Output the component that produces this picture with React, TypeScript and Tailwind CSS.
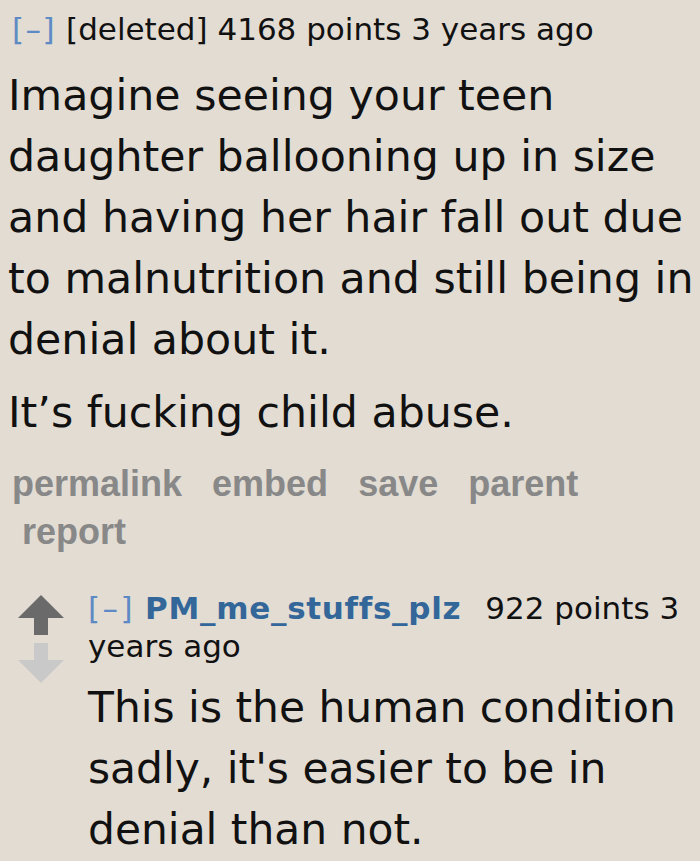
import React from "react";

const verdana = { fontFamily: '"DejaVu Sans", Verdana, sans-serif' };

const Arrow = ({ up, color }: { up?: boolean; color: string }) => (
  <svg width="46" height="40" viewBox="0 0 46 40" className={up ? "" : "rotate-180"}>
    <path d="M23 0 L46 23 L30 23 L30 40 L16 40 L16 23 L0 23 Z" fill={color} />
  </svg>
);

const links = ["permalink", "embed", "save", "parent", "report"];

export default function App() {
  return (
    <div
      className="w-[700px] h-[861px] overflow-hidden bg-[#e2dcd3] text-[#111] pl-[8px]"
      style={verdana}
    >
      {/* top comment */}
      <div className="pt-[12px] text-[31px] leading-[34px] whitespace-nowrap pl-[4px]">
        <span className="text-[#5d8ac4] tracking-[1.5px]">[–]</span>{" "}
        <span>[deleted]</span> 4168 points 3 years ago
      </div>

      <div className="text-[42.7px] leading-[61px] mt-[19px] whitespace-nowrap">
        <p>
          Imagine seeing your teen
          <br />
          daughter ballooning up in size
          <br />
          and having her hair fall out due
          <br />
          to malnutrition and still being in
          <br />
          denial about it.
        </p>
        <p className="mt-[12px]">It’s fucking child abuse.</p>
      </div>

      <ul
        className="flex flex-wrap gap-x-[30px] gap-y-[10px] w-[600px] pl-[4px] mt-[22px] font-bold text-[36px] leading-[38px] text-[#888888]"
        style={{ fontFamily: '"Liberation Sans", Arial, sans-serif' }}
      >
        {links.map((l, i) => (
          <li key={l} className={i === 4 ? "pl-[10px]" : ""}>
            {l}
          </li>
        ))}
      </ul>

      {/* child comment */}
      <div className="flex mt-[38px] pl-[10px]">
        <div className="flex flex-col gap-[8px] w-[70px] pt-[6px]">
          <Arrow up color="#6a6a6a" />
          <Arrow color="#c9c9c9" />
        </div>
        <div>
          <div className="text-[31px] leading-[38px] whitespace-nowrap">
            <span className="text-[#5d8ac4] tracking-[2.5px]">[–]</span>{" "}
            <span className="font-bold text-[#336699] tracking-[0.7px]">PM_me_stuffs_plz</span>
            <span className="inline-block w-[24px]" />
            922 points 3
            <br />
            years ago
          </div>
          <p className="text-[42.4px] leading-[61px] mt-[12px] whitespace-nowrap">
            This is the human condition
            <br />
            sadly, it's easier to be in
            <br />
            denial than not.
          </p>
        </div>
      </div>
    </div>
  );
}
